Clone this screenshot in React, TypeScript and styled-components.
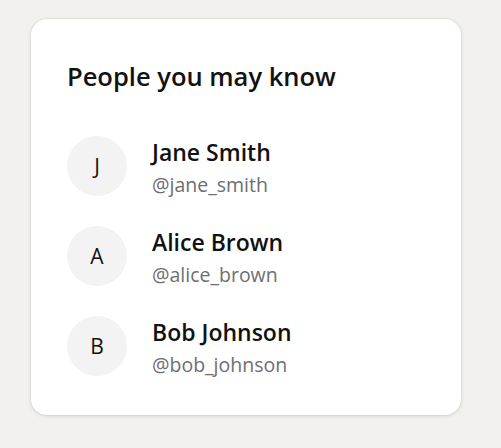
import React from "react";
import styled, { createGlobalStyle } from "styled-components";

const Global = createGlobalStyle`
  html, body { margin: 0; padding: 0; background: #f2f1ee; }
  body { font-family: "Open Sans", "Noto Sans", sans-serif; }
`;

const Page = styled.div`
  padding: 19px 40px 34px 31px;
`;

const Card = styled.section`
  width: 430px;
  box-sizing: border-box;
  background: #ffffff;
  border-radius: 16px;
  box-shadow: 0 1px 4px rgba(0, 0, 0, 0.12), 0 0 0 1px rgba(0, 0, 0, 0.03);
  padding: 36px 36px 37px;
`;

const Title = styled.h2`
  margin: 0 0 39px;
  font-size: 25.5px;
  line-height: 42px;
  font-weight: 600;
  color: #111;
`;

const List = styled.ul`
  list-style: none;
  margin: 0;
  padding: 0;
  display: flex;
  flex-direction: column;
  gap: 28px;
`;

const Row = styled.li`
  display: flex;
  align-items: flex-start;
  gap: 25px;
`;

const Avatar = styled.div`
  width: 60px;
  height: 60px;
  border-radius: 50%;
  background: #f3f3f3;
  display: flex;
  align-items: center;
  justify-content: center;
  font-size: 21px;
  color: #111;
  flex-shrink: 0;
`;

const Info = styled.div`
  display: flex;
  flex-direction: column;
  padding-top: 2px;
`;

const Name = styled.div`
  font-size: 23px;
  line-height: 28px;
  font-weight: 600;
  color: #111;
`;

const Handle = styled.div`
  margin-top: 6px;
  font-size: 19.5px;
  line-height: 26px;
  color: #6e6e72;
`;

const people = [
  { name: "Jane Smith", handle: "@jane_smith" },
  { name: "Alice Brown", handle: "@alice_brown" },
  { name: "Bob Johnson", handle: "@bob_johnson" },
];

export default function App() {
  return (
    <>
      <Global />
      <Page>
        <Card>
          <Title>People you may know</Title>
          <List>
            {people.map((p) => (
              <Row key={p.handle}>
                <Avatar>{p.name[0]}</Avatar>
                <Info>
                  <Name>{p.name}</Name>
                  <Handle>{p.handle}</Handle>
                </Info>
              </Row>
            ))}
          </List>
        </Card>
      </Page>
    </>
  );
}
